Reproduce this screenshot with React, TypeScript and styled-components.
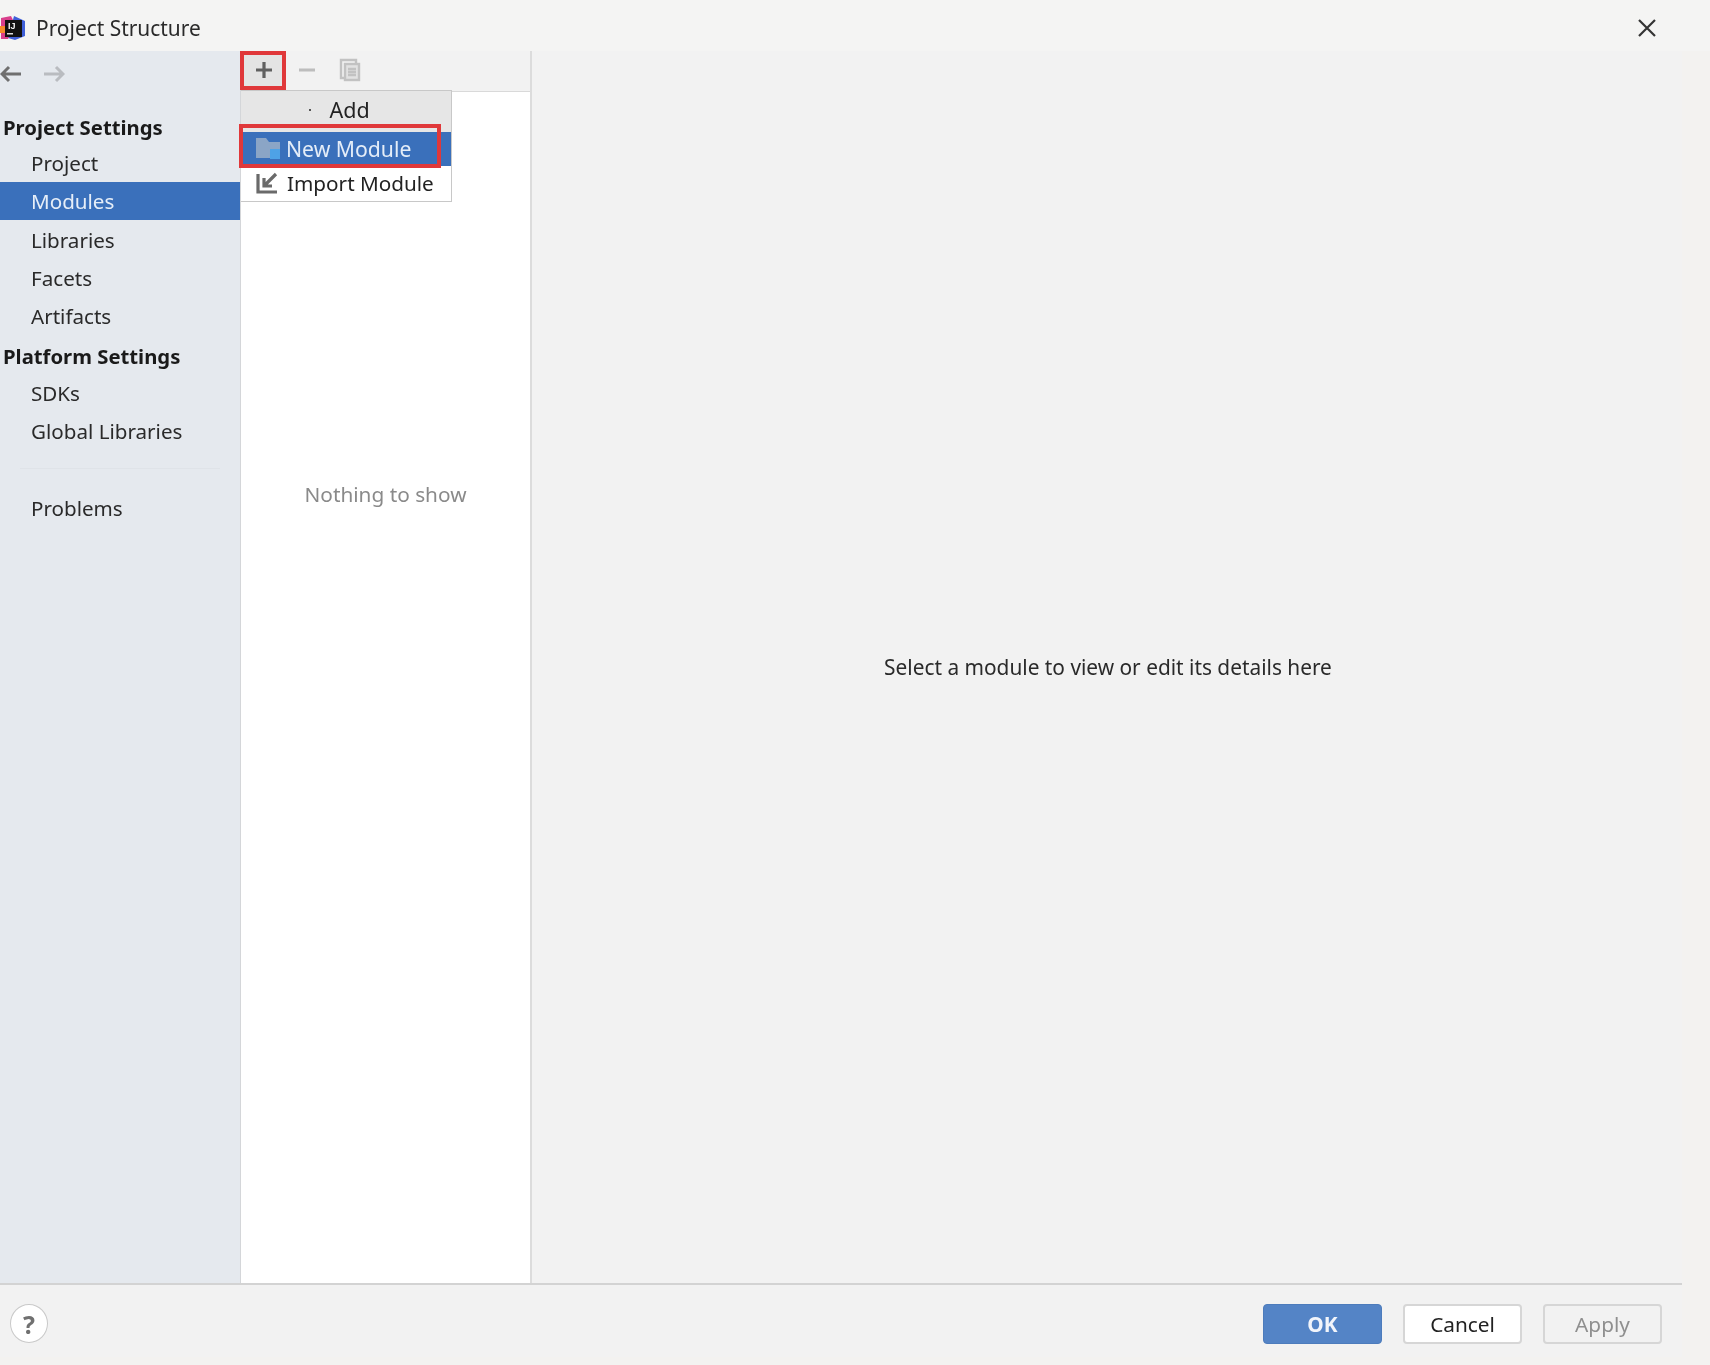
import React from "react";
import styled, { createGlobalStyle } from "styled-components";

const Global = createGlobalStyle`
  html, body { margin: 0; padding: 0; background: #f3f2f0; }
  body { font-family: "Noto Sans", "Open Sans", "Liberation Sans", sans-serif; color: #1e1e1e; }
  * { box-sizing: border-box; }
`;

const Window = styled.div`
  position: relative;
  width: 1710px;
  height: 1365px;
  display: flex;
  flex-direction: column;
  overflow: hidden;
  background: #f3f2f0;
  filter: blur(0.35px);
`;
const TitleBar = styled.header`
  height: 51px;
  flex: none;
  display: flex;
  align-items: center;
  padding: 4px 53px 0 0;
  background: #f4f4f3;
`;
const Title = styled.span`
  margin-left: 11px;
  font-size: 20.9px;
  color: #2a2a2a;
`;
const CloseButton = styled.button`
  margin-left: auto;
  padding: 0;
  width: 20px;
  height: 20px;
  display: flex;
  background: none;
  border: 0;
`;
const Body = styled.div`
  flex: 1;
  width: 1682px;
  min-height: 0;
  display: flex;
`;
const Sidebar = styled.nav`
  width: 241px;
  flex: none;
  display: flex;
  flex-direction: column;
  background: #e5e9ee;
  border-right: 1px solid #d4d6d9;
`;
const HistoryBar = styled.div`
  height: 58px;
  flex: none;
  display: flex;
  align-items: center;
  gap: 21px;
  padding-bottom: 12px;
`;
const Heading = styled.div<{ $h: number }>`
  height: ${(p) => p.$h}px;
  display: flex;
  align-items: center;
  padding-left: 3px;
  font-size: 20.3px;
  font-weight: 700;
  color: #1a1a1a;
`;
const NavItem = styled.div<{ $h: number; $active?: boolean }>`
  height: ${(p) => p.$h}px;
  display: flex;
  align-items: center;
  padding-left: 31px;
  font-size: 20.6px;
  color: ${(p) => (p.$active ? "#e6eef8" : "#2a2a2a")};
  background: ${(p) => (p.$active ? "#3a70bb" : "transparent")};
`;
const NavDivider = styled.div`
  height: 1px;
  margin: 15px 20px 20px;
  background: #dfe3e8;
`;
const ListColumn = styled.section`
  width: 291px;
  flex: none;
  display: flex;
  flex-direction: column;
  border-right: 2px solid #dcdcdc;
`;
const ListToolbar = styled.div`
  height: 41px;
  flex: none;
  display: flex;
  align-items: center;
  padding-bottom: 2px;
  background: #f2f2f2;
  border-bottom: 1px solid #d9d9d9;
`;
const ToolButton = styled.span<{ $w: number; $bg?: string }>`
  width: ${(p) => p.$w}px;
  height: 38px;
  flex: none;
  display: flex;
  align-items: center;
  justify-content: center;
  background: ${(p) => p.$bg || "transparent"};
`;
const ListBody = styled.div`
  flex: 1;
  display: flex;
  justify-content: center;
  padding-top: 388px;
  background: #fff;
  font-size: 20.8px;
  color: #8a8a8a;
`;
const DetailPane = styled.main`
  flex: 1;
  display: flex;
  align-items: center;
  justify-content: center;
  padding-left: 2px;
  font-size: 20.85px;
  color: #2a2a2a;
  background: #f2f2f2;
`;
const Footer = styled.footer`
  width: 1682px;
  height: 74px;
  margin-bottom: 8px;
  flex: none;
  display: flex;
  align-items: flex-start;
  padding: 19px 20px 0 10px;
  gap: 21px;
  background: #f2f2f2;
  border-top: 2px solid #d3d3d3;
`;
const HelpButton = styled.span`
  width: 38px;
  height: 39px;
  margin-right: auto;
  display: flex;
  align-items: center;
  justify-content: center;
  border-radius: 50%;
  border: 1px solid #c9c9c9;
  background: #fff;
  font-size: 25px;
  font-weight: 700;
  color: #707070;
`;
const DialogButton = styled.span<{ $kind: "primary" | "normal" | "disabled" }>`
  width: 119px;
  height: 40px;
  display: flex;
  align-items: center;
  justify-content: center;
  border-radius: 4px;
  font-size: 20.8px;
  font-weight: ${(p) => (p.$kind === "primary" ? 700 : 400)};
  color: ${(p) => (p.$kind === "primary" ? "#f2f5fb" : p.$kind === "normal" ? "#222" : "#8f8f8f")};
  background: ${(p) => (p.$kind === "primary" ? "#5484c6" : p.$kind === "normal" ? "#fff" : "transparent")};
  border: ${(p) => (p.$kind === "primary" ? "1px solid #4d7cbc" : "2px solid #d6d6d6")};
`;
const PopupMenu = styled.div`
  position: absolute;
  left: 241px;
  top: 90px;
  width: 211px;
  height: 112px;
  display: flex;
  flex-direction: column;
  background: #fff;
  border: 1px solid #c8c8c8;
  border-left: 0;
`;
const PopupHeader = styled.div`
  height: 41px;
  flex: none;
  display: flex;
  align-items: center;
  gap: 19px;
  padding: 0 0 4px 68px;
  background: #e6e6e6;
  font-size: 21.5px;
  color: #222;
`;
const HeaderDot = styled.i`
  width: 1.5px;
  height: 2px;
  background: #555;
`;
const MenuRow = styled.div<{ $h: number; $lift: number; $active?: boolean }>`
  height: ${(p) => p.$h}px;
  flex: none;
  display: flex;
  align-items: center;
  gap: ${(p) => (p.$active ? 5 : 6)}px;
  padding: 0 0 ${(p) => p.$lift}px 14px;
  font-size: ${(p) => (p.$active ? 21.2 : 20.7)}px;
  color: ${(p) => (p.$active ? "#e4edf8" : "#222")};
  background: ${(p) => (p.$active ? "#3a70bb" : "transparent")};
`;
const Highlight = styled.div<{ $x: number; $y: number; $w: number; $h: number }>`
  position: absolute;
  left: ${(p) => p.$x}px;
  top: ${(p) => p.$y}px;
  width: ${(p) => p.$w}px;
  height: ${(p) => p.$h}px;
  border: 4px solid #e0383a;
`;

const Logo = () => (
  <svg width="25" height="26" viewBox="0 0 25 26">
    <path d="M14 1 L25 6 L25 21 L15 25 L8 23 Z" fill="#3f5fd8" />
    <path d="M1 3 L11 1 L14 7 L8 24 L1 24 Z" fill="#d93f8c" />
    <path d="M0 11 L5 11 L5 18 L0 18 Z" fill="#f68a2b" />
    <rect x="5" y="5" width="17" height="17" fill="#111" />
    <text x="8" y="14" fontSize="9" fontWeight="700" fill="#f4f4f4" fontFamily="Liberation Sans, sans-serif">IJ</text>
    <rect x="7" y="18" width="6" height="1.5" fill="#ddd" />
  </svg>
);
const Arrow = ({ dir, color }: { dir: "l" | "r"; color: string }) => (
  <svg width="22" height="18" viewBox="0 0 22 18" fill="none" stroke={color} strokeWidth="3">
    {dir === "l" ? <path d="M21 9H2M9 2 2 9l7 7" /> : <path d="M1 9h19M13 2l7 7-7 7" />}
  </svg>
);
const Plus = () => (
  <svg width="18" height="18" viewBox="0 0 18 18" stroke="#606060" strokeWidth="3.2"><path d="M9 1v16M1 9h16" /></svg>
);
const Minus = () => (
  <svg width="18" height="18" viewBox="0 0 18 18" stroke="#bdbdbd" strokeWidth="3"><path d="M1 9h16" /></svg>
);
const CopyIcon = () => (
  <svg width="22" height="24" viewBox="0 0 22 24" fill="none" stroke="#c2c2c2" strokeWidth="2.4">
    <path d="M5 20H2V2h15v3" />
    <rect x="6" y="6" width="14" height="16" fill="#e2e2e2" />
    <path d="M9 11h8M9 14h8M9 17h8" />
  </svg>
);
const FolderIcon = () => (
  <svg width="26" height="24" viewBox="0 0 26 24">
    <path d="M1 2h10l3 4h11v16H1z" fill="#8ba5c6" />
    <rect x="15" y="13" width="10" height="10" fill="#4ea2e6" />
  </svg>
);
const ImportIcon = () => (
  <svg width="26" height="24" viewBox="0 0 26 24" fill="none" stroke="#6a6a6a" strokeWidth="3.2">
    <path d="M3 3v18h19" />
    <path d="M21 3 9 15M9 7v8h8" />
  </svg>
);
const CloseIcon = () => (
  <svg width="20" height="20" viewBox="0 0 20 20" stroke="#333" strokeWidth="2.2"><path d="M2 2l16 16M18 2 2 18" /></svg>
);

export default function App() {
  return (
    <Window>
      <Global />
      <TitleBar>
        <Logo />
        <Title>Project Structure</Title>
        <CloseButton><CloseIcon /></CloseButton>
      </TitleBar>
      <Body>
        <Sidebar>
          <HistoryBar>
            <Arrow dir="l" color="#6f6f6f" />
            <Arrow dir="r" color="#b9bcc0" />
          </HistoryBar>
          <Heading $h={35}>Project Settings</Heading>
          <NavItem $h={38}>Project</NavItem>
          <NavItem $h={38} $active>Modules</NavItem>
          <NavItem $h={39}>Libraries</NavItem>
          <NavItem $h={38}>Facets</NavItem>
          <NavItem $h={38}>Artifacts</NavItem>
          <Heading $h={42}>Platform Settings</Heading>
          <NavItem $h={31}>SDKs</NavItem>
          <NavItem $h={45}>Global Libraries</NavItem>
          <NavDivider />
          <NavItem $h={38}>Problems</NavItem>
        </Sidebar>
        <ListColumn>
          <ListToolbar>
            <ToolButton $w={45} $bg="#e4e4e4"><Plus /></ToolButton>
            <ToolButton $w={42}><Minus /></ToolButton>
            <ToolButton $w={44}><CopyIcon /></ToolButton>
          </ListToolbar>
          <ListBody>Nothing to show</ListBody>
        </ListColumn>
        <DetailPane>Select a module to view or edit its details here</DetailPane>
      </Body>
      <Footer>
        <HelpButton>?</HelpButton>
        <DialogButton $kind="primary">OK</DialogButton>
        <DialogButton $kind="normal">Cancel</DialogButton>
        <DialogButton $kind="disabled">Apply</DialogButton>
      </Footer>
      <PopupMenu>
        <PopupHeader><HeaderDot />Add</PopupHeader>
        <MenuRow $h={34} $lift={2} $active><FolderIcon />New Module</MenuRow>
        <MenuRow $h={35} $lift={1}><ImportIcon />Import Module</MenuRow>
      </PopupMenu>
      <Highlight $x={240} $y={51} $w={46} $h={39} />
      <Highlight $x={239} $y={124} $w={202} $h={44} />
    </Window>
  );
}
